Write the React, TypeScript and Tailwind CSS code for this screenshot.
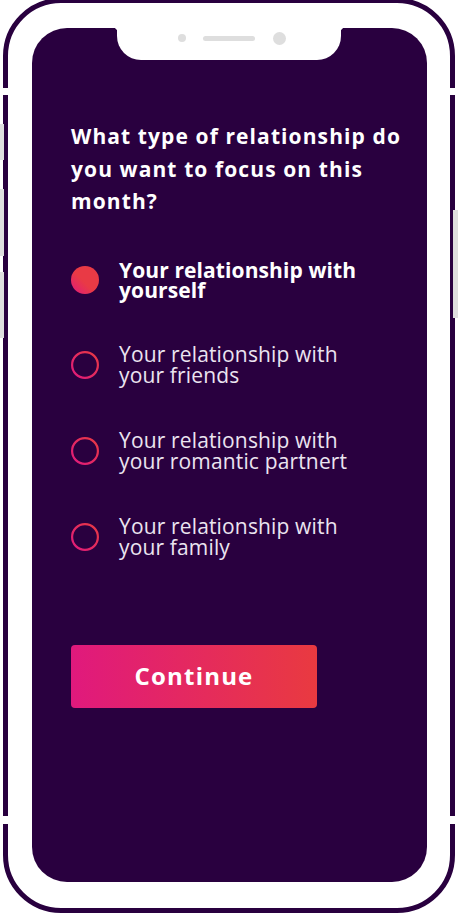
import React from "react";

const options = [
  { l1: "Your relationship with", l2: "yourself", selected: true },
  { l1: "Your relationship with", l2: "your friends", selected: false },
  { l1: "Your relationship with", l2: "your romantic partnert", selected: false },
  { l1: "Your relationship with", l2: "your family", selected: false },
];

function Ring({ id }: { id: string }) {
  return (
    <svg width="28" height="28" viewBox="0 0 28 28" className="shrink-0">
      <defs>
        <linearGradient id={id} x1="1" y1="0" x2="0" y2="1">
          <stop offset="0%" stopColor="#e83a42" />
          <stop offset="100%" stopColor="#e0197d" />
        </linearGradient>
      </defs>
      <circle cx="14" cy="14" r="12.9" fill="none" stroke={`url(#${id})`} strokeWidth="2.2" />
    </svg>
  );
}

export default function App() {
  return (
    <div className="w-[458px] h-[914px] overflow-hidden bg-white" style={{ fontFamily: '"Open Sans", sans-serif' }}>
      <div className="relative mx-[3px] mt-[-2px] h-[915px] rounded-[58px] border-[5px] border-[#29003f] pt-[25px] pl-[24px] pr-[23px] pb-[26px]">
        {/* outline breaks */}
        <div className="absolute left-[-6px] top-[85px] w-[10px] h-[7px] bg-white" />
        <div className="absolute right-[-6px] top-[85px] w-[10px] h-[7px] bg-white" />
        <div className="absolute left-[-6px] bottom-[84px] w-[10px] h-[8px] bg-white" />
        <div className="absolute right-[-6px] bottom-[84px] w-[10px] h-[8px] bg-white" />
        {/* side buttons */}
        <div className="absolute left-[-8px] top-[121px] w-[4px] h-[36px] bg-[#dedede]" />
        <div className="absolute left-[-8px] top-[186px] w-[4px] h-[67px] bg-[#dedede]" />
        <div className="absolute left-[-8px] top-[269px] w-[4px] h-[66px] bg-[#dedede]" />
        <div className="absolute right-[-8px] top-[207px] w-[5px] h-[108px] bg-[#dedede]" />

        {/* screen */}
        <div className="relative h-full rounded-[35px] bg-[#29003f] pl-[39px] pt-[92px]">
          {/* notch */}
          <div className="absolute left-[85px] top-0 w-[224px] h-[32px] bg-white rounded-b-[24px]">
            <div className="absolute left-[-4px] top-0 w-[4px] h-[4px] bg-[radial-gradient(circle_at_0_100%,transparent_4px,white_4.5px)]" />
            <div className="absolute right-[-4px] top-0 w-[4px] h-[4px] bg-[radial-gradient(circle_at_100%_100%,transparent_4px,white_4.5px)]" />
            <div className="absolute left-[61px] top-[6px] w-[8px] h-[8px] rounded-full bg-[#dedede]" />
            <div className="absolute left-[86px] top-[8px] w-[52px] h-[5px] rounded-full bg-[#dedede]" />
            <div className="absolute left-[156px] top-[4px] w-[13px] h-[13px] rounded-full bg-[#dedede]" />
          </div>

          <h1 className="text-[21px] font-bold leading-[32.5px] tracking-[1.1px] text-white">
            What type of relationship do
            <br />
            you want to focus on this
            <br />
            month?
          </h1>

          <div className="mt-[42px] flex flex-col gap-[44px]">
            {options.map((o, i) => (
              <div key={i} className="flex items-center gap-[20px]">
                {o.selected ? (
                  <div className="w-[28px] h-[28px] shrink-0 rounded-full bg-[linear-gradient(225deg,#e93a45_55%,#e0197d)]" />
                ) : (
                  <Ring id={`rg${i}`} />
                )}
                <div
                  className={
                    o.selected
                      ? "text-[21px] font-bold leading-[20px] tracking-[0.1px] text-white"
                      : "text-[21px] font-normal leading-[21px] tracking-[0.15px] text-[#ebe4f0]"
                  }
                >
                  {o.l1}
                  <br />
                  {o.l2}
                </div>
              </div>
            ))}
          </div>

          <button className="mt-[87px] flex h-[63px] w-[246px] items-center justify-center rounded-[4px] bg-[linear-gradient(90deg,#e0197d,#e93a40)] text-[24px] font-bold tracking-[1.2px] text-white">
            Continue
          </button>
        </div>
      </div>
    </div>
  );
}
